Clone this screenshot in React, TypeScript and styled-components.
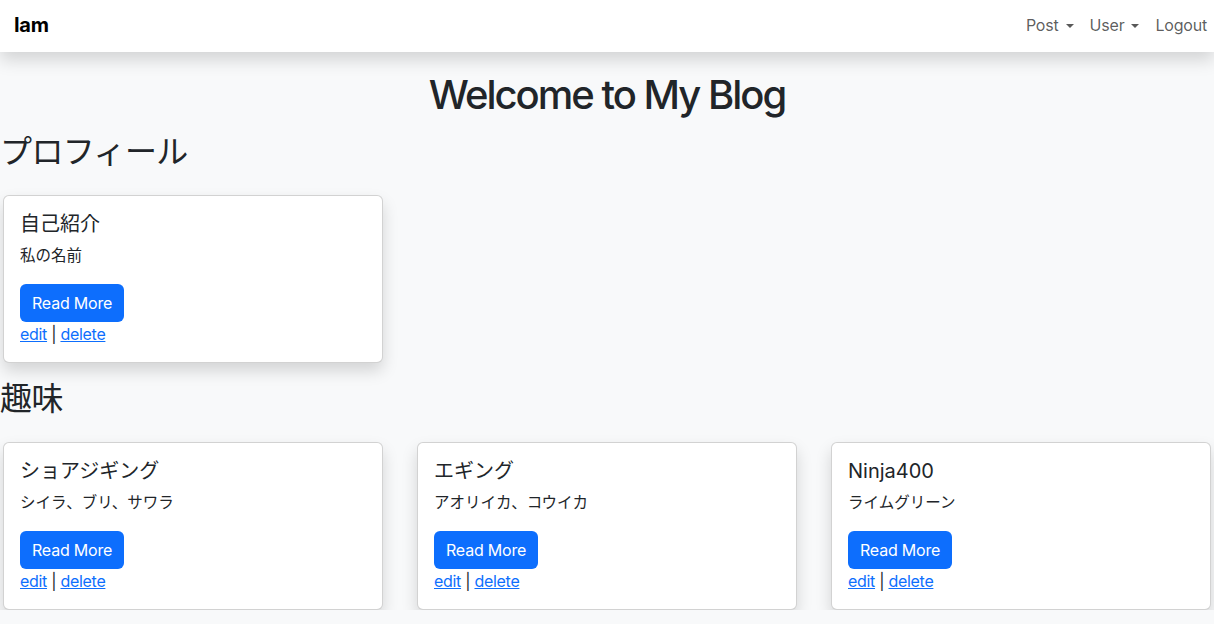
import React from "react";
import styled, { createGlobalStyle } from "styled-components";

const Global = createGlobalStyle`
  * { box-sizing: border-box; }
  html, body { margin: 0; padding: 0; }
  body {
    background: #f8f9fa;
    color: #212529;
    font-family: Inter, "Noto Sans CJK JP", "Noto Sans", sans-serif;
    font-size: 16px;
    line-height: 1.5;
  }
`;

const Navbar = styled.nav`
  height: 52px;
  background: #fff;
  box-shadow: 0 0.5rem 1rem rgba(0, 0, 0, 0.15);
  display: flex;
  align-items: center;
  justify-content: space-between;
  padding: 0 0 0 14px;
  position: relative;
  z-index: 1;
`;

const Brand = styled.a`
  font-size: 20px;
  font-weight: 700;
  color: #000;
  text-decoration: none;
  letter-spacing: -0.3px;
  transform: translateY(-1px);
`;

const NavList = styled.ul`
  list-style: none;
  margin: 0 -1px 0 0;
  padding: 0;
  display: flex;
  transform: translateY(-1px);
`;

const NavLink = styled.a<{ $dropdown?: boolean }>`
  display: inline-flex;
  align-items: center;
  padding: 8px 8px;
  color: rgba(0, 0, 0, 0.65);
  text-decoration: none;
  font-size: 16px;
  letter-spacing: -0.2px;
  &::after {
    content: "";
    display: ${(p) => (p.$dropdown ? "inline-block" : "none")};
    margin-left: 7px;
    border-top: 4.8px solid currentColor;
    border-left: 4.8px solid transparent;
    border-right: 4.8px solid transparent;
    transform: translateY(1px);
  }
`;

const Main = styled.main`
  padding: 0;
`;

const Title = styled.h1`
  margin: 19px 0 0;
  text-align: center;
  font-size: 40px;
  font-weight: 500;
  line-height: 48px;
  letter-spacing: -2px;
`;

const SectionTitle = styled.h2<{ $top: number }>`
  margin: ${(p) => p.$top}px 0 0;
  font-size: 32px;
  font-weight: 400;
  line-height: 38px;
  letter-spacing: -0.6px;
`;

const CardRow = styled.div`
  display: flex;
  gap: 34px;
  padding: 24px 0 0 3px;
`;

const Card = styled.div`
  width: 380px;
  background: #fff;
  border: 1px solid rgba(0, 0, 0, 0.175);
  border-radius: 6px;
  box-shadow: 0 0.5rem 1rem rgba(0, 0, 0, 0.15);
  padding: 16px;
`;

const CardTitle = styled.h5`
  margin: 0 0 8px;
  font-size: 20px;
  font-weight: 400;
  line-height: 24px;
`;

const CardText = styled.p`
  margin: 0 0 16px;
  font-size: 15.5px;
  line-height: 24px;
`;

const Button = styled.a`
  display: inline-block;
  background: #0d6efd;
  color: #fff;
  border-radius: 6px;
  padding: 0 12px;
  height: 38px;
  line-height: 38px;
  font-size: 16px;
  text-decoration: none;
  letter-spacing: -0.2px;
`;

const Actions = styled.div`
  font-size: 16px;
  line-height: 24px;
  letter-spacing: -0.3px;
`;

const Link = styled.a`
  color: #0d6efd;
  text-decoration: underline;
`;

type Post = { title: string; body: string };

const profile: Post[] = [{ title: "自己紹介", body: "私の名前" }];
const hobbies: Post[] = [
  { title: "ショアジギング", body: "シイラ、ブリ、サワラ" },
  { title: "エギング", body: "アオリイカ、コウイカ" },
  { title: "Ninja400", body: "ライムグリーン" },
];

const PostCard = ({ post }: { post: Post }) => (
  <Card>
    <CardTitle>{post.title}</CardTitle>
    <CardText>{post.body}</CardText>
    <Button href="#">Read More</Button>
    <Actions>
      <Link href="#">edit</Link> | <Link href="#">delete</Link>
    </Actions>
  </Card>
);

export default function App() {
  return (
    <>
      <Global />
      <Navbar>
        <Brand href="#">Iam</Brand>
        <NavList>
          <li><NavLink href="#" $dropdown>Post</NavLink></li>
          <li><NavLink href="#" $dropdown>User</NavLink></li>
          <li><NavLink href="#">Logout</NavLink></li>
        </NavList>
      </Navbar>
      <Main>
        <Title>Welcome to My Blog</Title>
        <SectionTitle $top={14}>プロフィール</SectionTitle>
        <CardRow>
          {profile.map((p) => <PostCard key={p.title} post={p} />)}
        </CardRow>
        <SectionTitle $top={17}>趣味</SectionTitle>
        <CardRow>
          {hobbies.map((p) => <PostCard key={p.title} post={p} />)}
        </CardRow>
      </Main>
    </>
  );
}
